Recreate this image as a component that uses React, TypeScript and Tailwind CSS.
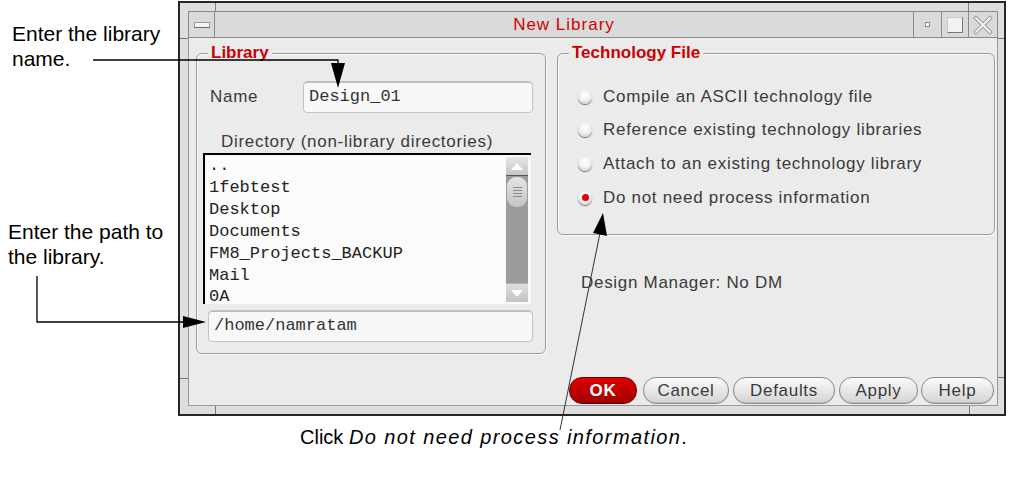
import React from "react";

function GroupBox({
  title,
  className,
  children,
}: {
  title: string;
  className: string;
  children?: React.ReactNode;
}) {
  return (
    <div
      className={
        "relative rounded-[6px] border border-[#9c9c9c] shadow-[inset_1px_1px_0_#fafafa,1px_1px_0_#fafafa] " +
        className
      }
    >
      <span className="absolute left-[11px] top-[-11px] bg-[#ebebeb] px-[3px] text-[17px] font-bold leading-[20px] text-[#cc0000]">
        {title}
      </span>
      {children}
    </div>
  );
}

function Radio({ checked, label }: { checked?: boolean; label: string }) {
  return (
    <div className="flex h-[33.67px] items-center gap-[11px] pl-[20px]">
      <div className="flex h-[14px] w-[14px] items-center justify-center rounded-full bg-[radial-gradient(circle_at_50%_35%,#ffffff_0%,#f2f2f2_45%,#bdbdbd_100%)] shadow-[0_1px_1px_#6a6a6a]">
        {checked && <div className="h-[7px] w-[7px] rounded-full bg-[#e00000]" />}
      </div>
      <span className="text-[17px] leading-[20px] tracking-[0.7px] text-[#3a3a3a]">{label}</span>
    </div>
  );
}

function Btn({ label, w, ok }: { label: string; w: string; ok?: boolean }) {
  return (
    <div
      className={
        "flex h-[27px] items-center justify-center rounded-[13px] border text-[17px] leading-[20px] tracking-[0.7px] " +
        w +
        (ok
          ? " border-[#6a0000] bg-linear-to-b from-[#e00000] to-[#a00000] font-bold text-white"
          : " border-[#8a8a8a] bg-linear-to-b from-[#fbfbfb] to-[#d4d4d4] text-[#3a3a3a] shadow-[inset_0_-1px_0_#bcbcbc]")
      }
    >
      {label}
    </div>
  );
}

function ScrollBar() {
  return (
    <div className="my-[2px] mr-[3px] flex w-[22px] shrink-0 flex-col">
      <div className="flex h-[19px] items-center justify-center border-b border-[#555] bg-linear-to-b from-[#e6e6e6] to-[#c6c6c6]">
        <div className="h-0 w-0 border-x-[6px] border-b-[7px] border-x-transparent border-b-white" />
      </div>
      <div className="flex flex-1 flex-col bg-[#9c9c9c]">
        <div className="mx-[1px] mt-[1px] flex h-[30px] flex-col items-center justify-center gap-[2px] rounded-[9px] bg-linear-to-b from-[#e4e4e4] to-[#c4c4c4]">
          <div className="h-px w-[9px] bg-[#8a8a8a]" />
          <div className="h-px w-[9px] bg-[#8a8a8a]" />
          <div className="h-px w-[9px] bg-[#8a8a8a]" />
          <div className="h-px w-[9px] bg-[#8a8a8a]" />
        </div>
      </div>
      <div className="flex h-[19px] items-center justify-center border-t border-[#b0b0b0] bg-linear-to-b from-[#dedede] to-[#c2c2c2]">
        <div className="h-0 w-0 border-x-[6px] border-t-[7px] border-x-transparent border-t-white" />
      </div>
    </div>
  );
}

function Window() {
  const items = ["..", "1febtest", "Desktop", "Documents", "FM8_Projects_BACKUP", "Mail", "0A"];
  return (
    <div className="relative mt-[1px] flex h-[415px] w-[828px] shrink-0 flex-col border-2 border-[#262626] bg-[#dedede] pb-[8px] pl-[8px] pr-[6px] pt-[8px]">
      {/* frame corner handles */}
      <div className="absolute left-[35px] top-0 h-[8px] w-px bg-[#7a7a7a]" />
      <div className="absolute left-[788px] top-0 h-[8px] w-px bg-[#7a7a7a]" />
      <div className="absolute bottom-0 left-[35px] h-[8px] w-px bg-[#7a7a7a]" />
      <div className="absolute bottom-0 left-[789px] h-[8px] w-px bg-[#7a7a7a]" />
      <div className="absolute left-0 top-[35px] h-px w-[8px] bg-[#7a7a7a]" />
      <div className="absolute left-0 top-[375px] h-px w-[8px] bg-[#7a7a7a]" />
      <div className="absolute right-0 top-[35px] h-px w-[6px] bg-[#7a7a7a]" />
      <div className="absolute right-0 top-[374px] h-px w-[6px] bg-[#7a7a7a]" />

      {/* title bar */}
      <div className="flex h-[27px] border border-[#8a8a8a] bg-[#dadada]">
        <div className="flex w-[26px] items-center justify-center border-r border-[#8a8a8a]">
          <div className="h-[6px] w-[16px] border border-[#9a9a9a] border-b-[#6a6a6a] bg-[#f4f4f4]" />
        </div>
        <div className="flex flex-1 items-center justify-center text-[17px] leading-[20px] tracking-[1px] text-[#d40000]">
          New Library
        </div>
        <div className="flex w-[28px] items-center justify-center border-l border-[#8a8a8a]">
          <div className="h-[5px] w-[5px] border border-[#8a8a8a] bg-white" />
        </div>
        <div className="flex w-[27px] items-center justify-center border-l border-[#8a8a8a]">
          <div className="h-[16px] w-[16px] border border-[#c8c8c8] border-b-[#777] border-r-[#777] bg-[#f2f2f2]" />
        </div>
        <div className="flex w-[29px] items-center justify-center border-l border-[#8a8a8a]">
          <svg width="20" height="20" viewBox="0 0 20 20">
            <path d="M3 3 L17 17 M17 3 L3 17" stroke="#9a9a9a" strokeWidth="4" strokeLinecap="square" />
            <path d="M3 3 L17 17 M17 3 L3 17" stroke="#f4f4f4" strokeWidth="2" strokeLinecap="square" />
          </svg>
        </div>
      </div>

      {/* client */}
      <div className="flex flex-1 flex-col border-x border-b border-[#9a9a9a] bg-[#ebebeb] text-[#3a3a3a]">
        <div className="flex pl-[7px] pt-[15px]">
          <GroupBox title="Library" className="flex h-[301px] w-[350px] flex-col">
            <div className="mt-[27px] flex h-[32px] items-center">
              <span className="w-[106px] pl-[13px] text-[17px] leading-[20px] tracking-[0.7px]">Name</span>
              <div className="flex h-[32px] w-[230px] items-center rounded-[4px] border border-[#c4c4c4] bg-[#f8f8f8] pl-[5px] font-['Liberation_Mono',monospace] text-[17px] text-[#333] shadow-[inset_0_1px_0_#bbb]">
                Design_01
              </div>
            </div>
            <div className="mt-[19px] pl-[24px] text-[17px] leading-[20px] tracking-[0.7px]">
              Directory (non-library directories)
            </div>
            <div className="ml-[6px] mt-[1px] flex h-[151px] w-[328px] border-l-2 border-t-2 border-black border-b-[#d0d0d0] border-r-[#d0d0d0] bg-[#fbfbfb]">
              <div className="flex-1 pl-[4px] font-['Liberation_Mono',monospace] text-[17px] leading-[21.9px] text-[#222]">
                {items.map((t) => (
                  <div key={t}>{t}</div>
                ))}
              </div>
              <ScrollBar />
            </div>
            <div className="ml-[11px] mt-[6px] flex h-[32px] w-[325px] items-center rounded-[4px] border border-[#c4c4c4] bg-[#f8f8f8] pl-[5px] font-['Liberation_Mono',monospace] text-[17px] text-[#333] shadow-[inset_0_1px_0_#bbb]">
              /home/namratam
            </div>
          </GroupBox>

          <div className="ml-[11px] flex w-[438px] flex-col">
            <GroupBox title="Technology File" className="h-[182px] pt-[26px]">
              <Radio label="Compile an ASCII technology file" />
              <Radio label="Reference existing technology libraries" />
              <Radio label="Attach to an existing technology library" />
              <Radio checked label="Do not need process information" />
            </GroupBox>
            <div className="mt-[38px] pl-[24px] text-[17px] leading-[20px] tracking-[0.7px]">
              Design Manager: No DM
            </div>
          </div>
        </div>

        <div className="mt-auto flex justify-end pb-[1px] pr-[3px]">
          <Btn ok label="OK" w="w-[68px]" />
          <div className="ml-[6px]">
            <Btn label="Cancel" w="w-[86px]" />
          </div>
          <div className="ml-[4px]">
            <Btn label="Defaults" w="w-[102px]" />
          </div>
          <div className="ml-[4px]">
            <Btn label="Apply" w="w-[79px]" />
          </div>
          <div className="ml-[3px]">
            <Btn label="Help" w="w-[73px]" />
          </div>
        </div>
      </div>
    </div>
  );
}

export default function App() {
  return (
    <div className="relative h-[497px] w-[1013px] overflow-hidden bg-white font-['Liberation_Sans',Arial,sans-serif] text-black">
      <div className="flex">
        <div className="w-[178px] shrink-0 text-[21px] leading-[25px]">
          <div className="pl-[12px] pt-[21px]">
            Enter the library
            <br />
            name.
          </div>
          <div className="mt-[148px] pl-[8px]">
            Enter the path to
            <br />
            the library.
          </div>
        </div>
        <Window />
      </div>
      <div className="mt-[9px] pl-[300px] text-[20px] leading-[24px]">
        Click <span className="italic tracking-[1.4px]">Do not need process information</span>.
      </div>

      <svg className="pointer-events-none absolute inset-0" width="1013" height="497" viewBox="0 0 1013 497">
        <polyline points="93,60 338,60 338,66" fill="none" stroke="#000" strokeWidth="1.3" />
        <polygon points="331,63 345,63 338,88" fill="#000" />
        <polyline points="37,276 37,322 186,322" fill="none" stroke="#000" strokeWidth="1.3" />
        <polygon points="183,316 183,328 206,322" fill="#000" />
        <line x1="560" y1="430" x2="600" y2="233" stroke="#333" strokeWidth="1" />
        <polygon points="593,233 607,236 603,213" fill="#000" />
      </svg>
    </div>
  );
}
